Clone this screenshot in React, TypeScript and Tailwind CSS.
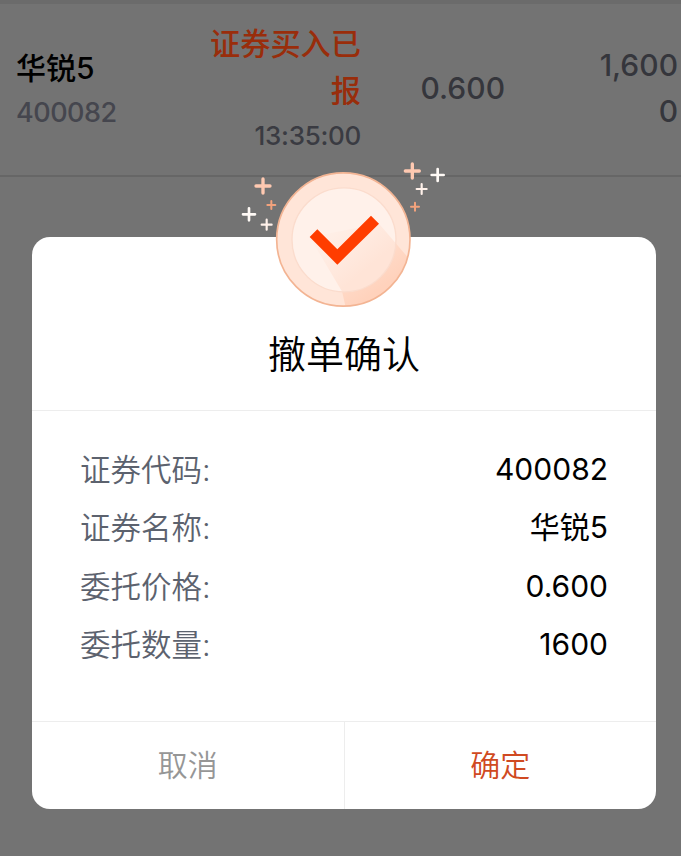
const ORDER_DETAILS = [
  { label: '证券代码:', value: '400082' },
  { label: '证券名称:', value: '华锐5' },
  { label: '委托价格:', value: '0.600' },
  { label: '委托数量:', value: '1600' },
];

// center, half length, stroke width, color
const SPARKLES = [
  { x: 99, y: 93, r: 21, w: 10, color: '#ffc9b1' },
  { x: 124, y: 150, r: 12, w: 6, color: '#f2a27c' },
  { x: 57, y: 178, r: 18, w: 8, color: '#fffaf6' },
  { x: 110, y: 209, r: 15, w: 6.5, color: '#fff1ea' },
  { x: 547, y: 48, r: 21, w: 10, color: '#ffc9b1' },
  { x: 623, y: 60, r: 18, w: 8, color: '#fffaf6' },
  { x: 575, y: 102, r: 15, w: 6.5, color: '#fff1ea' },
  { x: 555, y: 155, r: 12, w: 6, color: '#f2a27c' },
];

function SuccessBadge() {
  return (
    <svg
      className="absolute left-[198px] -top-[82px] w-[230px] h-[160px] pointer-events-none"
      viewBox="0 0 690 480"
      fill="none"
    >
      <defs>
        <linearGradient id="ring-shadow" x1="330" y1="240" x2="450" y2="400" gradientUnits="userSpaceOnUse">
          <stop stopColor="#ffd9c6" stopOpacity="0.2" />
          <stop offset="1" stopColor="#ffd2bc" />
        </linearGradient>
        <linearGradient id="inner-shadow" x1="300" y1="230" x2="400" y2="350" gradientUnits="userSpaceOnUse">
          <stop stopColor="#ffe6da" stopOpacity="0.2" />
          <stop offset="1" stopColor="#ffe4d7" />
        </linearGradient>
        <clipPath id="outer-clip">
          <circle cx="340" cy="253.5" r="199" />
        </clipPath>
        <clipPath id="inner-clip">
          <circle cx="342" cy="254.5" r="156" />
        </clipPath>
      </defs>

      <circle cx="340" cy="253.5" r="200" fill="#ffe5d8" />
      <path d="M447 206 L560 338 L560 470 L350 470 L334 400 L239 246 Z" fill="url(#ring-shadow)" clipPath="url(#outer-clip)" />
      <circle cx="340" cy="253.5" r="200" stroke="#f3b493" strokeWidth="5" />
      <circle cx="342" cy="254.5" r="156" fill="#fff1ea" />
      <path d="M447 206 L560 338 L560 470 L372 470 L239 246 Z" fill="url(#inner-shadow)" clipPath="url(#inner-clip)" />
      <circle cx="342" cy="254.5" r="156" stroke="#fbdccd" strokeWidth="4" />
      <path d="M262 223 L322 283 L423 182 L447 206 L322 329 L239 246 Z" fill="#ff3d00" />

      {SPARKLES.map((s) => (
        <path
          key={`${s.x}-${s.y}`}
          d={`M${s.x - s.r} ${s.y}h${s.r * 2}M${s.x} ${s.y - s.r}v${s.r * 2}`}
          stroke={s.color}
          strokeWidth={s.w}
          strokeLinecap="round"
        />
      ))}
    </svg>
  );
}

function OrderRow() {
  return (
    <div className="flex h-[177px] border-t-4 border-b-2 border-t-[#6b6b6b] border-b-[#666666] font-medium text-[30px] leading-[46px] text-[#35363c]">
      <div className="w-[180px] pl-4 pt-[41px]">
        <div className="text-black">华锐5</div>
        <div className="text-[27px] leading-[44px] tracking-[-0.5px] text-[#45464e]">400082</div>
      </div>
      <div className="w-[181px] pl-[26px] pt-[17px] text-right">
        <div className="text-[#992d0b] text-[30.2px] leading-[47px]">
          证券买入已
          <br />报
        </div>
        <div className="text-[26px] leading-[42px] tracking-[-0.3px] text-[#3a3b42]">13:35:00</div>
      </div>
      <div className="w-[144px] pt-[61px] text-right">0.600</div>
      <div className="flex-1 pt-[38px] pr-[3px] text-right">
        1,600
        <br />0
      </div>
    </div>
  );
}

export default function App() {
  return (
    <div className="relative w-[681px] h-[856px] overflow-hidden bg-[#737373] font-['Inter','Noto_Sans_CJK_SC',sans-serif]">
      <OrderRow />

      {/* Confirm dialog */}
      <div className="absolute left-8 top-[237px] w-[624px] h-[572px] flex flex-col rounded-[18px] bg-white">
        <SuccessBadge />
        <h2 className="h-[174px] pt-[89px] border-b border-[#ededed] text-center text-[38px] leading-[56px] font-[350] text-black">
          撤单确认
        </h2>

        <div className="flex-1 px-12 pt-[29px]">
          {ORDER_DETAILS.map((item) => (
            <div key={item.label} className="flex justify-between text-[30.5px] leading-[58.4px]">
              <span className="pt-px -mb-px font-[350] text-[#5c626e]">{item.label}</span>
              <span className="text-black text-[30px]">{item.value}</span>
            </div>
          ))}
        </div>

        <div className="flex h-[88px] border-t border-[#ededed] text-[30px] font-[350]">
          <button className="flex-1 border-r border-[#ededed] text-[#969696]">取消</button>
          <button className="flex-1 text-[#d04a22]">确定</button>
        </div>
      </div>
    </div>
  );
}
